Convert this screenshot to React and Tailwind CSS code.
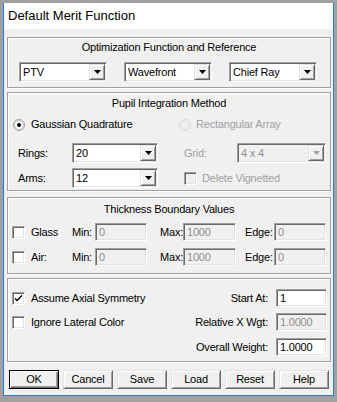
import React from 'react';

const sunken =
  'border border-t-[#a0a0a0] border-l-[#a0a0a0] border-r-white border-b-white shadow-[inset_1px_1px_0_#696969,inset_-1px_-1px_0_#e3e3e3]';
const raised =
  'border border-t-[#e3e3e3] border-l-[#e3e3e3] border-r-[#696969] border-b-[#696969] shadow-[inset_1px_1px_0_#fff,inset_-1px_-1px_0_#a0a0a0] bg-[#f0f0f0]';

const Arrow = ({ disabled }) => (
  <svg width="7" height="4" viewBox="0 0 7 4">
    <polygon points="0,0 7,0 3.5,4" fill={disabled ? '#a0a0a0' : '#000'} />
  </svg>
);

const Combo = ({ w, value, disabled }) => (
  <div
    className={`${sunken} flex h-[20px] p-[1px] ${disabled ? 'bg-[#f0f0f0] text-[#8c8c8c]' : 'bg-white text-black'}`}
    style={{ width: w }}
  >
    <div className="flex-1 flex items-center pl-[2px] leading-[13px]">{value}</div>
    <div className={`${raised} w-[16px] h-full flex items-center justify-center`}>
      <Arrow disabled={disabled} />
    </div>
  </div>
);

const Field = ({ w, value, disabled }) => (
  <div
    className={`${sunken} flex items-center h-[18px] pl-[3px] leading-[13px] ${disabled ? 'bg-[#f0f0f0] text-[#8c8c8c]' : 'bg-white text-black'}`}
    style={{ width: w }}
  >
    {value}
  </div>
);

const Check = ({ checked, disabled }) => (
  <div
    className={`${sunken} w-[13px] h-[13px] shrink-0 flex items-center justify-center ${disabled ? 'bg-[#f0f0f0]' : 'bg-white'}`}
  >
    {checked && (
      <svg width="7" height="7" viewBox="0 0 7 7">
        <path d="M0 2.5 L0 4.5 L2 6.5 L7 1.5 L7 -0.5 L2 4.5 Z" fill="#000" />
      </svg>
    )}
  </div>
);

const Radio = ({ checked, disabled }) => (
  <svg width="12" height="12" viewBox="0 0 12 12" className="shrink-0">
    <circle cx="6" cy="6" r="5.5" fill={disabled ? '#f0f0f0' : '#fff'} stroke={disabled ? '#dadada' : '#a0a0a0'} />
    <circle cx="6" cy="6" r="4.5" fill="none" stroke={disabled ? '#e3e3e3' : '#c8c8c8'} />
    {checked && <circle cx="6" cy="6" r="2" fill="#000" />}
  </svg>
);

const Group = ({ h, mt, children }) => (
  <div
    className={`w-[324px] ml-[3px] border border-[#a0a0a0] shadow-[inset_1px_1px_0_#fff,1px_1px_0_#fff] flex flex-col ${mt}`}
    style={{ height: h }}
  >
    {children}
  </div>
);

const Btn = ({ label, primary }) => (
  <div
    className={`w-[50px] h-[19px] flex items-center justify-center leading-[13px] ${
      primary
        ? 'border border-black bg-[#f0f0f0] shadow-[inset_1px_1px_0_#fff,inset_-1px_-1px_0_#696969,inset_-2px_-2px_0_#a0a0a0]'
        : raised
    }`}
  >
    {label}
  </div>
);

export default function App() {
  return (
    <div
      className="w-[337px] h-[402px] bg-[#a0a0a0] pt-[3px] pl-[3px] text-[11px] tracking-[-0.2px] text-black"
      style={{ fontFamily: '"Liberation Sans", Arial, sans-serif' }}
    >
      <div className="w-[331px] h-[393px] border-x border-b border-[#2a7fd4] bg-[#f0f0f0] flex flex-col">
        <div className="h-[26px] bg-white flex items-center pl-[4px] text-[13px] tracking-normal">
          Default Merit Function
        </div>

        <Group h={51} mt="mt-[8px]">
          <div className="mt-[3px] text-center leading-[13px]">Optimization Function and Reference</div>
          <div className="flex mt-[8px] ml-[11px] gap-[17px]">
            <Combo w={88} value="PTV" />
            <Combo w={88} value="Wavefront" />
            <Combo w={88} value="Chief Ray" />
          </div>
        </Group>

        <Group h={99} mt="mt-[4px]">
          <div className="mt-[4px] text-center leading-[13px]">Pupil Integration Method</div>
          <div className="flex items-center h-[13px] mt-[8px] ml-[5px]">
            <div className="w-[166px] flex items-center gap-[6px]">
              <Radio checked />
              <span>Gaussian Quadrature</span>
            </div>
            <div className="flex items-center gap-[5px] text-[#a0a0a0]">
              <Radio disabled />
              <span>Rectangular Array</span>
            </div>
          </div>
          <div className="flex items-center mt-[12px] ml-[10px]">
            <span className="w-[54px]">Rings:</span>
            <Combo w={86} value="20" />
            <span className="w-[53px] ml-[26px] text-[#a0a0a0]">Grid:</span>
            <Combo w={89} value="4 x 4" disabled />
          </div>
          <div className="flex items-center mt-[5px] ml-[10px]">
            <span className="w-[54px]">Arms:</span>
            <Combo w={86} value="12" />
            <div className="ml-[26px] flex items-center gap-[5px] text-[#a0a0a0]">
              <Check disabled />
              <span>Delete Vignetted</span>
            </div>
          </div>
        </Group>

        <Group h={77} mt="mt-[6px]">
          <div className="mt-[5px] text-center leading-[13px]">Thickness Boundary Values</div>
          {[
            ['Glass', 'mt-[7px]'],
            ['Air:', 'mt-[7px]'],
          ].map(([name, m]) => (
            <div key={name} className={`flex items-center ${m} ml-[4px] whitespace-nowrap`}>
              <div className="w-[60px] flex items-center gap-[6px]">
                <Check />
                <span>{name}</span>
              </div>
              <span className="w-[23px]">Min:</span>
              <Field w={52} value="0" disabled />
              <span className="w-[23px] ml-[13px]">Max:</span>
              <Field w={53} value="1000" disabled />
              <span className="w-[29px] ml-[9px]">Edge:</span>
              <Field w={52} value="0" disabled />
            </div>
          ))}
        </Group>

        <Group h={84} mt="mt-[4px]">
          <div className="flex flex-col mt-[10px] gap-[6px]">
            <div className="flex items-center h-[18px] ml-[4px]">
              <div className="flex-1 flex items-center gap-[6px]">
                <Check checked />
                <span>Assume Axial Symmetry</span>
              </div>
              <span className="mr-[8px]">Start At:</span>
              <Field w={51} value="1" />
              <div className="w-[3px]" />
            </div>
            <div className="flex items-center h-[18px] ml-[4px]">
              <div className="flex-1 flex items-center gap-[6px]">
                <Check />
                <span>Ignore Lateral Color</span>
              </div>
              <span className="mr-[8px]">Relative X Wgt:</span>
              <Field w={51} value="1.0000" disabled />
              <div className="w-[3px]" />
            </div>
            <div className="flex items-center h-[18px] ml-[4px] mt-[1px]">
              <div className="flex-1" />
              <span className="mr-[8px]">Overall Weight:</span>
              <Field w={51} value="1.0000" />
              <div className="w-[3px]" />
            </div>
          </div>
        </Group>

        <div className="flex gap-[4px] ml-[5px] mt-[8px]">
          <Btn label="OK" primary />
          <Btn label="Cancel" />
          <Btn label="Save" />
          <Btn label="Load" />
          <Btn label="Reset" />
          <Btn label="Help" />
        </div>
      </div>
    </div>
  );
}
